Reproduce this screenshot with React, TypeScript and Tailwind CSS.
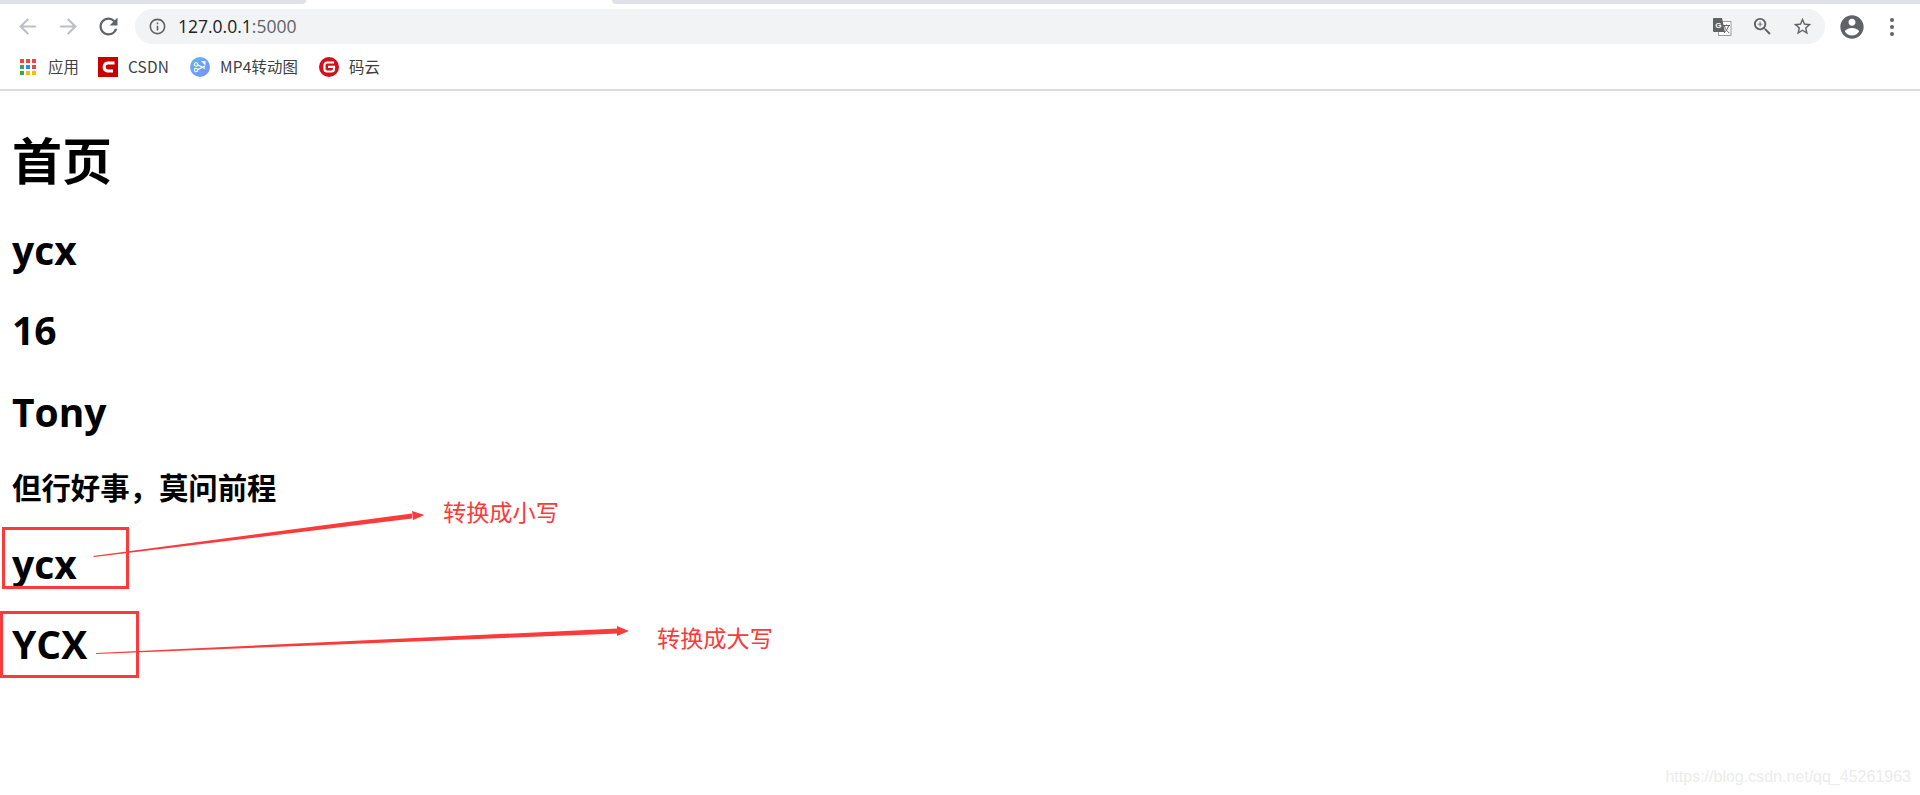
import type { ReactNode } from "react";

const cjk = "font-['Open_Sans','Noto_Sans_CJK_SC',sans-serif]";

function Mat({ d, size, box, color }: { d: string; size: number; box: number; color: string }) {
  return (
    <div className="flex items-center justify-center shrink-0" style={{ width: box, height: box }}>
      <svg className="shrink-0" width={size} height={size} viewBox="0 0 24 24" fill={color}>
        <path d={d} />
      </svg>
    </div>
  );
}

function AppsIcon() {
  const colors = ["#ef4444", "#ef4444", "#ef4444", "#34a853", "#1e90ff", "#ef4444", "#34a853", "#fbbc04", "#fbbc04"];
  return (
    <div className="grid grid-cols-3 gap-[2px] w-[16px]">
      {colors.map((c, i) => (
        <span key={i} className="size-[4px]" style={{ backgroundColor: c }} />
      ))}
    </div>
  );
}

function CsdnIcon() {
  return (
    <svg width="20" height="20" viewBox="0 0 20 20">
      <rect width="20" height="20" fill="#c90000" />
      <path d="M16.5 6 H10 C5.5 6 4.5 13 9.5 14 H15" fill="none" stroke="#fff" strokeWidth="3" />
    </svg>
  );
}

function Mp4Icon() {
  return (
    <svg width="20" height="20" viewBox="0 0 20 20">
      <defs>
        <linearGradient id="mp4" x1="0" y1="0" x2="1" y2="1">
          <stop offset="0" stopColor="#5db5f5" />
          <stop offset="1" stopColor="#7f8ff8" />
        </linearGradient>
      </defs>
      <circle cx="10" cy="10" r="10" fill="url(#mp4)" />
      <path d="M7 7.5 L15 11.5 M7 13 L15 9" stroke="#fff" strokeWidth="1.3" />
      <circle cx="6" cy="7.5" r="1.7" fill="none" stroke="#fff" strokeWidth="1.1" />
      <circle cx="6" cy="13" r="1.7" fill="none" stroke="#fff" strokeWidth="1.1" />
      <path d="M11 4 L15.5 4 L15.5 8.5 Z" fill="#fff" />
    </svg>
  );
}

function GiteeIcon() {
  return (
    <svg width="20" height="20" viewBox="0 0 20 20">
      <circle cx="10" cy="10" r="10" fill="#d0101a" />
      <path d="M15 5.5 H8 A2.5 2.5 0 0 0 5.5 8 V12 A2.5 2.5 0 0 0 8 14.5 H12.5 A2.5 2.5 0 0 0 15 12 V9.8 H9" fill="none" stroke="#fff" strokeWidth="2.2" />
    </svg>
  );
}

function TranslateIcon() {
  return (
    <svg width="20" height="20" viewBox="0 0 20 20">
      <rect x="6.5" y="4.5" width="12.5" height="14" fill="#fff" stroke="#9a9da1" strokeWidth="1" />
      <path d="M1 2 a1 1 0 0 1 1 -1 H10 L13 15 H2 a1 1 0 0 1 -1 -1 Z" fill="#5f6368" />
      <text x="3.2" y="11" fontSize="8" fontWeight="700" fill="#fff" fontFamily="Liberation Sans">G</text>
      <path d="M11 8.5 H18 M14.5 7.5 V9 M12.5 9 C13.5 12.5 15 14.5 17.5 16 M16.5 9 C15.5 12 14 14.5 12 16" fill="none" stroke="#5f6368" strokeWidth="1" />
    </svg>
  );
}

function Bookmark({ icon, label, className, gap }: { icon: ReactNode; label: string; className: string; gap: string }) {
  return (
    <div className={`flex items-center ${gap} ${className}`}>
      {icon}
      <span className="pb-[1px] text-[15.4px] tracking-[0.2px] text-[#3c4043] leading-none font-['Noto_Sans_CJK_SC',sans-serif]">{label}</span>
    </div>
  );
}

function BrowserChrome() {
  return (
    <header className="bg-white border-b-2 border-[#dadce0]">
      <div className="flex h-[4px] bg-white">
        <div className="w-[306px] rounded-br-[4px] bg-[#dee1e6]" />
        <div className="w-[306px]" />
        <div className="flex-1 rounded-bl-[4px] bg-[#dee1e6]" />
      </div>
      <div className="flex items-center h-[45px] pl-[17px] pr-[18px]">
        <Mat box={20} size={25} color="#bcbfc3" d="M20 11H7.83l5.59-5.59L12 4l-8 8 8 8 1.41-1.41L7.83 13H20v-2z" />
        <div className="ml-[21px]">
          <Mat box={20} size={25} color="#bcbfc3" d="M12 4l-1.41 1.41L16.17 11H4v2h12.17l-5.58 5.59L12 20l8-8z" />
        </div>
        <div className="ml-[21px]">
          <Mat box={18} size={27} color="#5f6368" d="M17.65 6.35A7.958 7.958 0 0 0 12 4c-4.42 0-7.99 3.58-7.99 8s3.57 8 7.99 8c3.73 0 6.84-2.55 7.73-6h-2.08A5.99 5.99 0 0 1 12 18c-3.31 0-6-2.69-6-6s2.69-6 6-6c1.66 0 3.14.69 4.22 1.78L13 11h7V4l-2.35 2.35z" />
        </div>
        <div className="flex items-center flex-1 h-[35px] ml-[18px] pl-[14px] pr-[13px] rounded-full bg-[#f1f3f4]">
          <Mat box={17} size={19} color="#5f6368" d="M11 7h2v2h-2zm0 4h2v6h-2zm1-9C6.48 2 2 6.48 2 12s4.48 10 10 10 10-4.48 10-10S17.52 2 12 2zm0 18c-4.41 0-8-3.59-8-8s3.59-8 8-8 8 3.59 8 8-3.59 8-8 8z" />
          <span className="ml-[12px] text-[17.5px] text-[#202124] font-['Open_Sans',sans-serif]">
            127.0.0.1<span className="text-[#5f6368]">:5000</span>
          </span>
          <div className="ml-auto flex items-center gap-[20px]">
            <TranslateIcon />
            <Mat box={20} size={23} color="#5f6368" d="M15.5 14h-.79l-.28-.27A6.471 6.471 0 0 0 16 9.5 6.5 6.5 0 1 0 9.5 16c1.61 0 3.09-.59 4.23-1.57l.27.28v.79l5 4.99L20.49 19l-4.99-5zm-6 0C7.01 14 5 11.99 5 9.5S7.01 5 9.5 5 14 7.01 14 9.5 11.99 14 9.5 14zM12 10h-2v2H9v-2H7V9h2V7h1v2h2v1z" />
            <Mat box={20} size={21} color="#5f6368" d="M22 9.24l-7.19-.62L12 2 9.19 8.63 2 9.24l5.46 4.73L5.82 21 12 17.27 18.18 21l-1.63-7.03L22 9.24zM12 15.4l-3.76 2.27 1-4.28-3.32-2.88 4.38-.38L12 6.1l1.71 4.04 4.38.38-3.32 2.88 1 4.28L12 15.4z" />
          </div>
        </div>
        <div className="ml-[15px]">
          <Mat box={24} size={28} color="#5f6368" d="M12 2C6.48 2 2 6.48 2 12s4.48 10 10 10 10-4.48 10-10S17.52 2 12 2zm0 3c1.66 0 3 1.34 3 3s-1.34 3-3 3-3-1.34-3-3 1.34-3 3-3zm0 14.2c-2.5 0-4.71-1.28-6-3.22.03-1.99 4-3.08 6-3.08 1.99 0 5.97 1.09 6 3.08-1.29 1.94-3.5 3.22-6 3.22z" />
        </div>
        <div className="ml-[18px] flex flex-col items-center gap-[3px] w-[20px]">
          <span className="size-[4px] rounded-full bg-[#5f6368]" />
          <span className="size-[4px] rounded-full bg-[#5f6368]" />
          <span className="size-[4px] rounded-full bg-[#5f6368]" />
        </div>
      </div>
      <div className="flex items-center h-[36px] mb-[4px] pl-[20px]">
        <Bookmark icon={<AppsIcon />} label="应用" className="w-[78px]" gap="gap-[12px]" />
        <Bookmark icon={<CsdnIcon />} label="CSDN" className="w-[92px]" gap="gap-[10px]" />
        <Bookmark icon={<Mp4Icon />} label="MP4转动图" className="w-[129px]" gap="gap-[10px]" />
        <Bookmark icon={<GiteeIcon />} label="码云" className="" gap="gap-[10px]" />
      </div>
    </header>
  );
}

function Annotations() {
  return (
    <>
      <div className="absolute left-[2px] top-[527px] w-[127px] h-[62px] border-[3px] border-[#fc3a3a]" />
      <div className="absolute left-0 top-[611px] w-[139px] h-[67px] border-[3px] border-[#fc3a3a]" />
      <svg className="absolute inset-0 pointer-events-none" width="1920" height="795">
        <path d="M93 556 L94 557 L412 518.5 L412 513.5 Z" fill="#fc3a3a" />
        <path d="M412 511 L424.5 515 L413 520 Z" fill="#fc3a3a" />
        <path d="M96 653 L96 654 L618 633.5 L618 628.5 Z" fill="#fc3a3a" />
        <path d="M617 626 L629 631 L617 636 Z" fill="#fc3a3a" />
      </svg>
      <span className={`absolute left-[443px] top-[496px] text-[#fc3a3a] text-[23.2px] leading-[32px] ${cjk}`}>转换成小写</span>
      <span className={`absolute left-[657px] top-[622px] text-[#fc3a3a] text-[23.2px] leading-[32px] ${cjk}`}>转换成大写</span>
      <span className="absolute right-[9px] top-[769px] text-[#ececec] text-[16px] leading-none font-['Liberation_Sans',sans-serif]">
        https://blog.csdn.net/qq_45261963
      </span>
    </>
  );
}

export default function App() {
  return (
    <div className="relative w-[1920px] h-[795px] overflow-hidden bg-white text-black">
      <BrowserChrome />
      <main className={`pl-[12px] font-bold ${cjk}`}>
        <h1 className="mt-[37px] text-[50px] leading-[66px]">首页</h1>
        <h2 className="mt-[29px] text-[39px] leading-[53px]">ycx</h2>
        <h2 className="mt-[27px] text-[39px] leading-[53px]">16</h2>
        <h2 className="mt-[29px] text-[39px] leading-[53px]">Tony</h2>
        <h3 className="mt-[31px] text-[29.4px] leading-[39px]">但行好事，莫问前程</h3>
        <h2 className="mt-[29px] text-[39px] leading-[53px]">ycx</h2>
        <h2 className="mt-[27px] text-[39px] leading-[53px]">YCX</h2>
      </main>
      <Annotations />
    </div>
  );
}
